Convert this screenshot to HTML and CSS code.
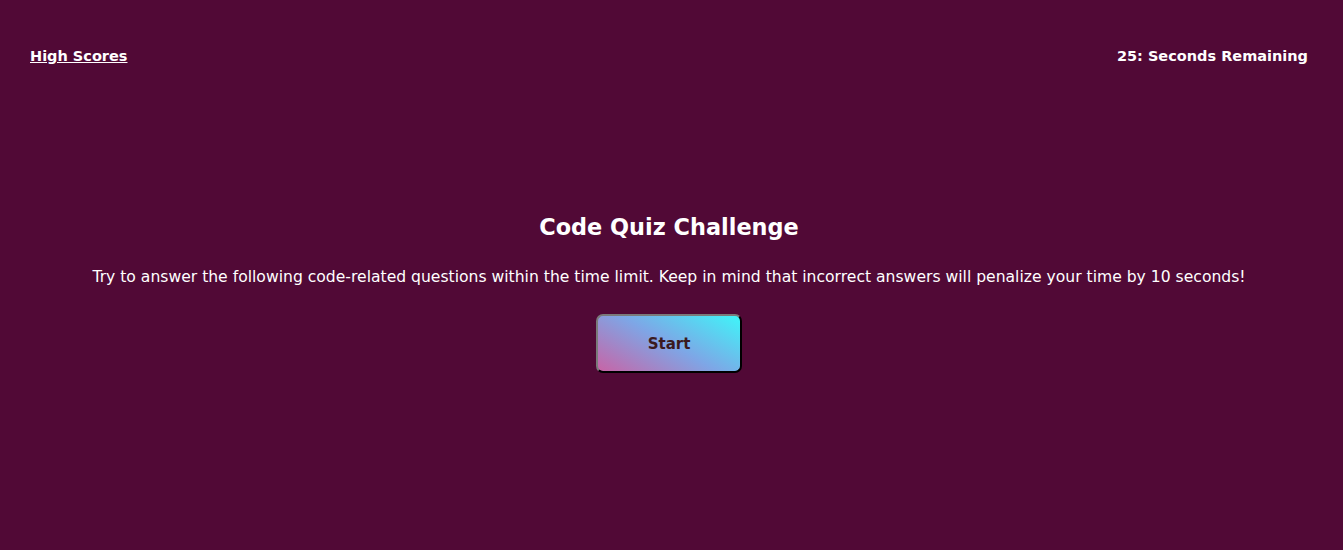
FILE: index.html
```html
<!DOCTYPE html>
<html lang="en">
<head>
<meta charset="utf-8">
<title>Code Quiz</title>
<link rel="stylesheet" href="styles.css">
</head>
<body>
<header class="top-bar">
  <a class="high-scores" href="#">High Scores</a>
  <div class="timer">25: Seconds Remaining</div>
</header>
<main class="intro">
  <h1 class="title">Code Quiz Challenge</h1>
  <p class="lead">Try to answer the following code-related questions within the time limit. Keep in mind that incorrect answers will penalize your time by 10 seconds!</p>
  <button class="start-btn" type="button">Start</button>
</main>
</body>
</html>
```
FILE: styles.css
```css
html, body {
  margin: 0;
  padding: 0;
}
body {
  background: #510936;
  color: #ffffff;
  font-family: "DejaVu Sans", "Liberation Sans", sans-serif;
  height: 550px;
}
.top-bar {
  display: flex;
  justify-content: space-between;
  align-items: center;
  padding: 48px 35px 0 30px;
  font-weight: bold;
  font-size: 14.5px;
}
.high-scores {
  color: #ffffff;
  text-decoration: underline;
}
.intro {
  display: flex;
  flex-direction: column;
  align-items: center;
  padding: 150px 5px 0 0;
}
.title {
  margin: 0;
  font-size: 22.4px;
  font-weight: bold;
}
.lead {
  margin: 28px 0 0;
  font-size: 15.6px;
}
.start-btn {
  margin-top: 28px;
  width: 146px;
  height: 59px;
  border: 2px outset #777;
  border-color: #7a7a7a #222 #222 #7a7a7a;
  border-radius: 7px;
  background: linear-gradient(30deg, #c864a6 0%, #7ea6e6 50%, #3ff5f9 100%);
  color: #3a1a20;
  font-family: "DejaVu Sans", sans-serif;
  font-size: 15px;
  font-weight: bold;
}
```
